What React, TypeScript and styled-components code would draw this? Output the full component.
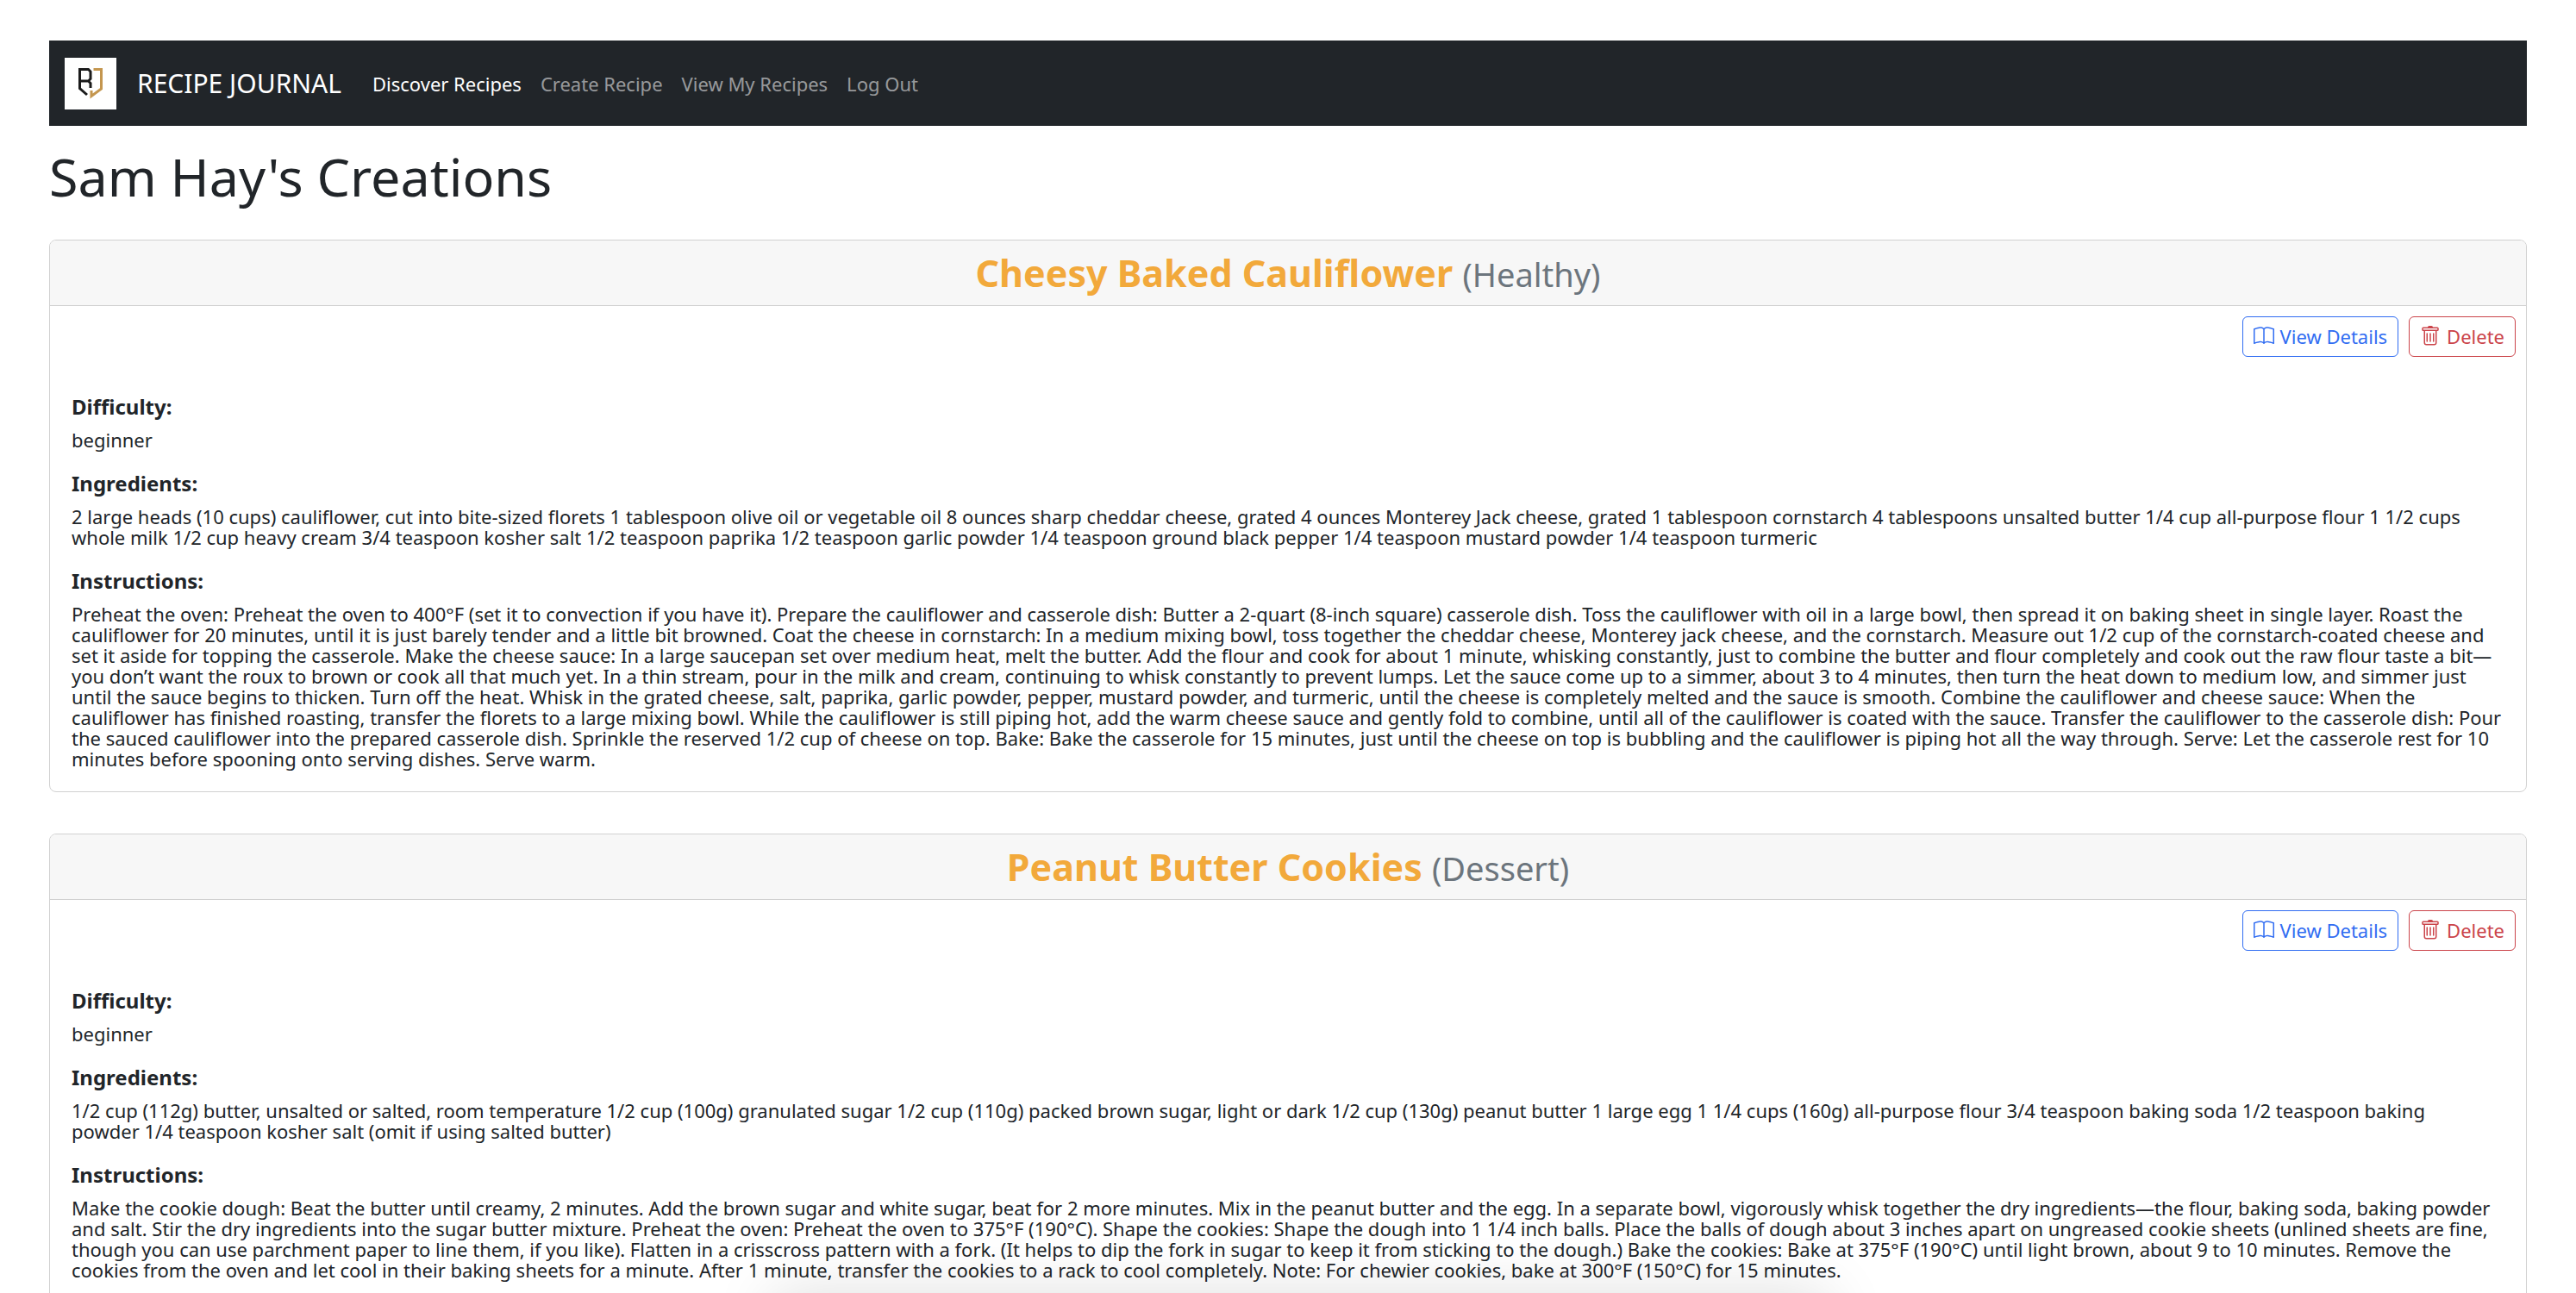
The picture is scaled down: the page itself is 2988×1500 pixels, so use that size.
import React from "react";
import styled, { createGlobalStyle } from "styled-components";
import { BsBook, BsTrash } from "react-icons/bs";

const GlobalStyle = createGlobalStyle`
  *, *::before, *::after { box-sizing: border-box; }
  body {
    margin: 0;
    background: #fff;
    color: #212529;
    font-family: "Noto Sans", "Open Sans", sans-serif;
    font-size: 22px;
    line-height: 24px;
  }
`;

const Page = styled.div`
  padding: 47px 57px 48px;
`;

const Navbar = styled.nav`
  display: flex;
  align-items: center;
  min-height: 99px;
  padding: 0 18px;
  background: #212529;
`;

const Brand = styled.a`
  display: flex;
  align-items: center;
  gap: 24px;
  margin-right: 36px;
  color: #fff;
  font-size: 30px;
  line-height: 40px;
  text-decoration: none;
`;

const Logo = styled.svg`
  width: 60px;
  height: 60px;
  background: #fff;
`;

const NavLinks = styled.div`
  display: flex;
  flex-wrap: wrap;
  gap: 22px;
`;

const NavLink = styled.a<{ $active?: boolean }>`
  color: ${(p) => (p.$active ? "#fff" : "rgba(255, 255, 255, 0.55)")};
  text-decoration: none;
`;

const Title = styled.h1`
  margin: 22px 0 36px;
  font-size: 61px;
  font-weight: 400;
  line-height: 74px;
`;

const RecipeList = styled.main`
  display: grid;
  gap: 48px;
`;

const Card = styled.article`
  border: 1px solid #d1d1d1;
  border-radius: 8px;
  overflow: hidden;
`;

const CardHeader = styled.header`
  padding: 8px 24px;
  border-bottom: 1px solid #d1d1d1;
  background: #f7f7f7;
  text-align: center;
`;

const RecipeName = styled.h2`
  margin: 0;
  color: #f2a93b;
  font-size: 43px;
  font-weight: 700;
  line-height: 59px;
`;

const Category = styled.small`
  color: #6c757d;
  font-size: 38px;
  font-weight: 400;
  line-height: 40px;
`;

const Actions = styled.div`
  display: flex;
  justify-content: flex-end;
  gap: 12px;
  padding: 12px 12px 0;
`;

const ActionButton = styled.button<{ $color: string }>`
  display: flex;
  align-items: center;
  gap: 7px;
  height: 47px;
  padding: 0 12px 1px;
  border: 1px solid ${(p) => p.$color};
  border-radius: 6px;
  background: transparent;
  color: ${(p) => p.$color};
  font: inherit;
  cursor: pointer;

  svg {
    width: 24px;
    height: 24px;
  }
`;

const CardBody = styled.div`
  display: grid;
  gap: 25px;
  padding: 44px 25px 26px;
`;

const FieldLabel = styled.h3`
  margin: 0 0 12px;
  font-size: 24px;
  font-weight: 700;
  line-height: 28px;
`;

const FieldText = styled.p`
  margin: 0;
  white-space: pre-line;
`;

const BottomShade = styled.div`
  position: fixed;
  top: 100%;
  left: 30%;
  width: 41%;
  height: 120px;
  box-shadow: 0 0 70px rgba(0, 0, 0, 0.13);
  pointer-events: none;
`;

interface Recipe {
  name: string;
  category: string;
  difficulty: string;
  ingredients: string;
  instructions: string;
}

const recipes: Recipe[] = [
  {
    name: "Cheesy Baked Cauliflower",
    category: "Healthy",
    difficulty: "beginner",
    ingredients: `2 large heads (10 cups) cauliflower, cut into bite-sized florets 1 tablespoon olive oil or vegetable oil 8 ounces sharp cheddar cheese, grated 4 ounces Monterey Jack cheese, grated 1 tablespoon cornstarch 4 tablespoons unsalted butter 1/4 cup all-purpose flour 1 1/2 cups
whole milk 1/2 cup heavy cream 3/4 teaspoon kosher salt 1/2 teaspoon paprika 1/2 teaspoon garlic powder 1/4 teaspoon ground black pepper 1/4 teaspoon mustard powder 1/4 teaspoon turmeric`,
    instructions: `Preheat the oven: Preheat the oven to 400°F (set it to convection if you have it). Prepare the cauliflower and casserole dish: Butter a 2-quart (8-inch square) casserole dish. Toss the cauliflower with oil in a large bowl, then spread it on baking sheet in single layer. Roast the
cauliflower for 20 minutes, until it is just barely tender and a little bit browned. Coat the cheese in cornstarch: In a medium mixing bowl, toss together the cheddar cheese, Monterey jack cheese, and the cornstarch. Measure out 1/2 cup of the cornstarch-coated cheese and
set it aside for topping the casserole. Make the cheese sauce: In a large saucepan set over medium heat, melt the butter. Add the flour and cook for about 1 minute, whisking constantly, just to combine the butter and flour completely and cook out the raw flour taste a bit—
you don’t want the roux to brown or cook all that much yet. In a thin stream, pour in the milk and cream, continuing to whisk constantly to prevent lumps. Let the sauce come up to a simmer, about 3 to 4 minutes, then turn the heat down to medium low, and simmer just
until the sauce begins to thicken. Turn off the heat. Whisk in the grated cheese, salt, paprika, garlic powder, pepper, mustard powder, and turmeric, until the cheese is completely melted and the sauce is smooth. Combine the cauliflower and cheese sauce: When the
cauliflower has finished roasting, transfer the florets to a large mixing bowl. While the cauliflower is still piping hot, add the warm cheese sauce and gently fold to combine, until all of the cauliflower is coated with the sauce. Transfer the cauliflower to the casserole dish: Pour
the sauced cauliflower into the prepared casserole dish. Sprinkle the reserved 1/2 cup of cheese on top. Bake: Bake the casserole for 15 minutes, just until the cheese on top is bubbling and the cauliflower is piping hot all the way through. Serve: Let the casserole rest for 10
minutes before spooning onto serving dishes. Serve warm.`,
  },
  {
    name: "Peanut Butter Cookies",
    category: "Dessert",
    difficulty: "beginner",
    ingredients: `1/2 cup (112g) butter, unsalted or salted, room temperature 1/2 cup (100g) granulated sugar 1/2 cup (110g) packed brown sugar, light or dark 1/2 cup (130g) peanut butter 1 large egg 1 1/4 cups (160g) all-purpose flour 3/4 teaspoon baking soda 1/2 teaspoon baking
powder 1/4 teaspoon kosher salt (omit if using salted butter)`,
    instructions: `Make the cookie dough: Beat the butter until creamy, 2 minutes. Add the brown sugar and white sugar, beat for 2 more minutes. Mix in the peanut butter and the egg. In a separate bowl, vigorously whisk together the dry ingredients—the flour, baking soda, baking powder
and salt. Stir the dry ingredients into the sugar butter mixture. Preheat the oven: Preheat the oven to 375°F (190°C). Shape the cookies: Shape the dough into 1 1/4 inch balls. Place the balls of dough about 3 inches apart on ungreased cookie sheets (unlined sheets are fine,
though you can use parchment paper to line them, if you like). Flatten in a crisscross pattern with a fork. (It helps to dip the fork in sugar to keep it from sticking to the dough.) Bake the cookies: Bake at 375°F (190°C) until light brown, about 9 to 10 minutes. Remove the
cookies from the oven and let cool in their baking sheets for a minute. After 1 minute, transfer the cookies to a rack to cool completely. Note: For chewier cookies, bake at 300°F (150°C) for 15 minutes.`,
  },
];

function Field({ label, text }: { label: string; text: string }) {
  return (
    <section>
      <FieldLabel>{label}:</FieldLabel>
      <FieldText>{text}</FieldText>
    </section>
  );
}

function RecipeCard({ recipe }: { recipe: Recipe }) {
  return (
    <Card>
      <CardHeader>
        <RecipeName>
          {recipe.name} <Category>({recipe.category})</Category>
        </RecipeName>
      </CardHeader>
      <Actions>
        <ActionButton type="button" $color="#316df2">
          <BsBook aria-hidden />
          View Details
        </ActionButton>
        <ActionButton type="button" $color="#cb444a">
          <BsTrash aria-hidden />
          Delete
        </ActionButton>
      </Actions>
      <CardBody>
        <Field label="Difficulty" text={recipe.difficulty} />
        <Field label="Ingredients" text={recipe.ingredients} />
        <Field label="Instructions" text={recipe.instructions} />
      </CardBody>
    </Card>
  );
}

export default function App() {
  return (
    <>
      <GlobalStyle />
      <Page>
        <Navbar>
          <Brand href="#home">
            <Logo viewBox="0 0 60 60" fill="none" strokeWidth="3" aria-hidden>
              <path d="M26 43 L17.5 35.5 V13.5 H27.5 L30 16 V24.5 L27.5 27 H17.5 M27.5 27 L30 29.5 V35" stroke="#1b1b1b" />
              <path d="M33.5 13.5 H42.5 V36 L31 44.5 V38" stroke="#c4964f" />
            </Logo>
            RECIPE JOURNAL
          </Brand>
          <NavLinks>
            <NavLink href="#discover" $active>Discover Recipes</NavLink>
            <NavLink href="#create">Create Recipe</NavLink>
            <NavLink href="#mine">View My Recipes</NavLink>
            <NavLink href="#logout">Log Out</NavLink>
          </NavLinks>
        </Navbar>
        <Title>Sam Hay's Creations</Title>
        <RecipeList>
          {recipes.map((recipe) => (
            <RecipeCard key={recipe.name} recipe={recipe} />
          ))}
        </RecipeList>
      </Page>
      <BottomShade />
    </>
  );
}
